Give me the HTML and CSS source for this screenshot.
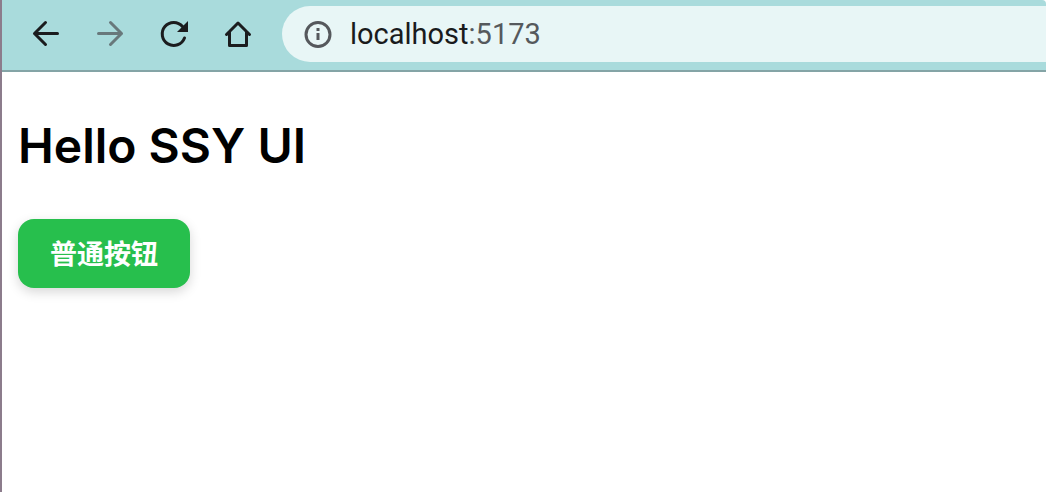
FILE: index.html
```html
<!DOCTYPE html>
<html lang="zh-CN">
<head>
<meta charset="utf-8">
<title>SSY UI</title>
<link rel="stylesheet" href="styles.css">
</head>
<body>
<div class="window">
  <header class="toolbar">
    <nav class="nav" aria-label="Browser">
      <button class="nav-button" type="button" aria-label="Back">
        <svg viewBox="0 0 32 32"><path d="M27.500 15.500H4.500M15.500 4.500L4.500 15.500L15.500 26.500"/></svg>
      </button>
      <button class="nav-button" type="button" aria-label="Forward" disabled>
        <svg viewBox="0 0 32 32"><path d="M4.500 15.500H27.500M16.500 4.500L27.500 15.500L16.500 26.500"/></svg>
      </button>
      <button class="nav-button" type="button" aria-label="Reload">
        <svg viewBox="0 0 32 32"><path d="M26.500 20A11.500 11.500 0 1 1 24.500 8.500"/><path class="solid" d="M30 3V14H19Z"/></svg>
      </button>
      <button class="nav-button" type="button" aria-label="Home">
        <svg viewBox="0 0 32 32"><path class="home" d="M4.500 16.500L16 5L27.500 16.500M7.500 13.500V27.500H24.500V13.500"/></svg>
      </button>
    </nav>
    <div class="address">
      <svg class="info" viewBox="0 0 28 28"><circle cx="14" cy="14.500" r="12"/><path d="M14 13V20M14 8V11"/></svg>
      <span class="url">localhost<span class="port">:5173</span></span>
    </div>
  </header>
  <main class="page">
    <h1 class="title">Hello SSY UI</h1>
    <button class="action" type="button">普通按钮</button>
  </main>
</div>
</body>
</html>
```
FILE: styles.css
```css
* { box-sizing: border-box; }
body { margin: 0; background: #fff; }
.window {
  min-height: 100vh;
  border-left: 2px solid #8c7c8c;
  background: #fff;
}
.toolbar {
  display: flex;
  align-items: center;
  gap: 28px;
  height: 72px;
  padding: 0 0 2px 28px;
  background: #a9dbdc;
  border-bottom: 2px solid #84a4a6;
  border-top-right-radius: 4px;
}
.nav { display: flex; gap: 32px; }
.nav-button {
  width: 32px;
  height: 32px;
  padding: 0;
  border: 0;
  background: none;
  color: #1b1c1e;
}
.nav-button:disabled { color: #68787b; }
.nav-button svg {
  display: block;
  width: 32px;
  height: 32px;
  fill: none;
  stroke: currentColor;
  stroke-width: 3;
  stroke-linecap: round;
  stroke-linejoin: round;
}
.nav-button .solid { fill: currentColor; stroke: none; }
.address {
  display: flex;
  flex: 1;
  align-items: center;
  gap: 18px;
  height: 56px;
  padding-left: 22px;
  border-radius: 28px 0 0 28px;
  background: #e8f6f6;
}
.info {
  width: 28px;
  height: 28px;
  overflow: visible;
  fill: none;
  stroke: #55585c;
  stroke-width: 3;
}
.url {
  font: 29px/32px Roboto, sans-serif;
  color: #191b1d;
}
.port { color: #55595c; }
.page { padding: 46px 16px; }
.title {
  margin: 0 0 45px;
  font: 600 48px/56px Inter, sans-serif;
  color: #000;
}
.action {
  display: block;
  padding: 15px 32px 17px;
  border: 0;
  border-radius: 16px;
  background: #27bf4d;
  box-shadow: 0 4px 12px rgba(0, 0, 0, 0.16);
  color: #fff;
  font: 700 27px/37px "Noto Sans CJK SC", sans-serif;
}
```
